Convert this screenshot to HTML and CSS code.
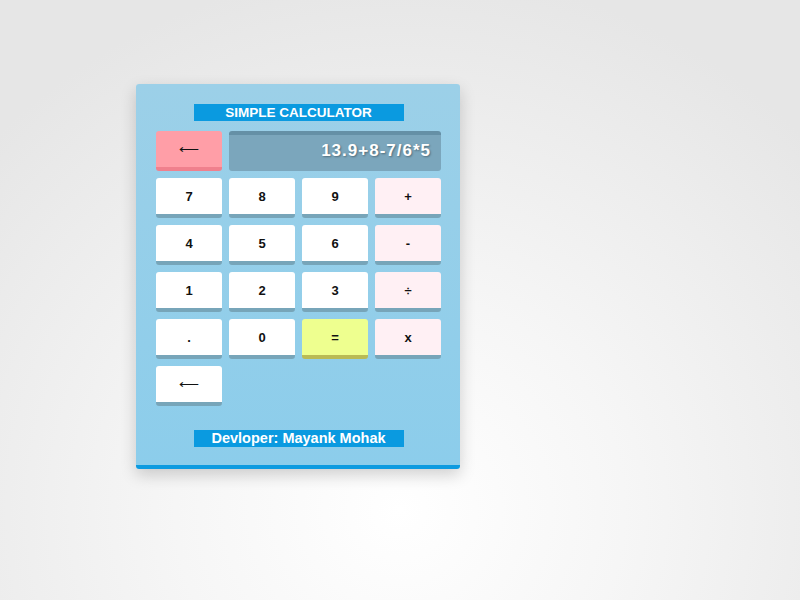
FILE: index.html
```html
<!DOCTYPE html>
<html>
<head>
<meta charset="utf-8">
<link rel="stylesheet" href="styles.css">
</head>
<body>
<div class="calc">
  <div class="banner">SIMPLE CALCULATOR</div>
  <div class="keys">
    <div class="key back">⟵</div>
    <div class="display">13.9+8-7/6*5</div>
    <div class="key">7</div>
    <div class="key">8</div>
    <div class="key">9</div>
    <div class="key op">+</div>
    <div class="key">4</div>
    <div class="key">5</div>
    <div class="key">6</div>
    <div class="key op">-</div>
    <div class="key">1</div>
    <div class="key">2</div>
    <div class="key">3</div>
    <div class="key op">÷</div>
    <div class="key">.</div>
    <div class="key">0</div>
    <div class="key eq">=</div>
    <div class="key op">x</div>
    <div class="key arrow">⟵</div>
  </div>
  <div class="banner footer">Devloper: Mayank Mohak</div>
</div>
</body>
</html>
```
FILE: styles.css
```css
html, body {
  margin: 0;
  height: 100%;
}
body {
  background: radial-gradient(ellipse 70% 90% at 50% 85%, #ffffff 0%, #f6f6f6 40%, #e6e6e6 100%);
  font-family: "Liberation Sans", Arial, sans-serif;
  padding-top: 84px;
  padding-left: 136px;
  box-sizing: border-box;
}
.calc {
  width: 324px;
  box-sizing: border-box;
  padding: 20px 19px 18px 20px;
  background: linear-gradient(#9cd0e8, #8ccdeb);
  border-bottom: 4px solid #0d9be0;
  border-radius: 3px;
  box-shadow: 0 6px 16px rgba(0,0,0,0.18);
}
.banner {
  width: 210px;
  height: 17px;
  margin: 0 auto;
  background: #0a9ae0;
  color: #fff;
  font-weight: bold;
  font-size: 13.5px;
  line-height: 17px;
  text-align: center;
}
.footer {
  margin-top: 24px;
  font-size: 14.5px;
}
.keys {
  margin-top: 10px;
  display: grid;
  grid-template-columns: repeat(4, 66px);
  grid-auto-rows: 40px;
  gap: 7px;
}
.key {
  box-sizing: border-box;
  background: #fff;
  border-bottom: 4px solid #77a5b9;
  border-radius: 3px;
  display: flex;
  align-items: center;
  justify-content: center;
  font-weight: bold;
  font-size: 13px;
  color: #111;
}
.op {
  background: #fff0f4;
}
.eq {
  background: #eeff8f;
  border-bottom-color: #b9bb55;
}
.back {
  background: #ff9ea7;
  border-bottom-color: #f0808d;
  font-weight: normal;
  font-size: 14px;
}
.arrow {
  font-weight: normal;
  font-size: 14px;
}
.display {
  grid-column: span 3;
  box-sizing: border-box;
  background: #7ba6bc;
  border-top: 4px solid #6590a6;
  border-radius: 3px;
  color: #fff;
  font-weight: bold;
  font-size: 17px;
  letter-spacing: 1px;
  text-align: right;
  padding-right: 10px;
  line-height: 32px;
  text-shadow: 1px 1px 2px rgba(0,0,0,0.35);
}
```
